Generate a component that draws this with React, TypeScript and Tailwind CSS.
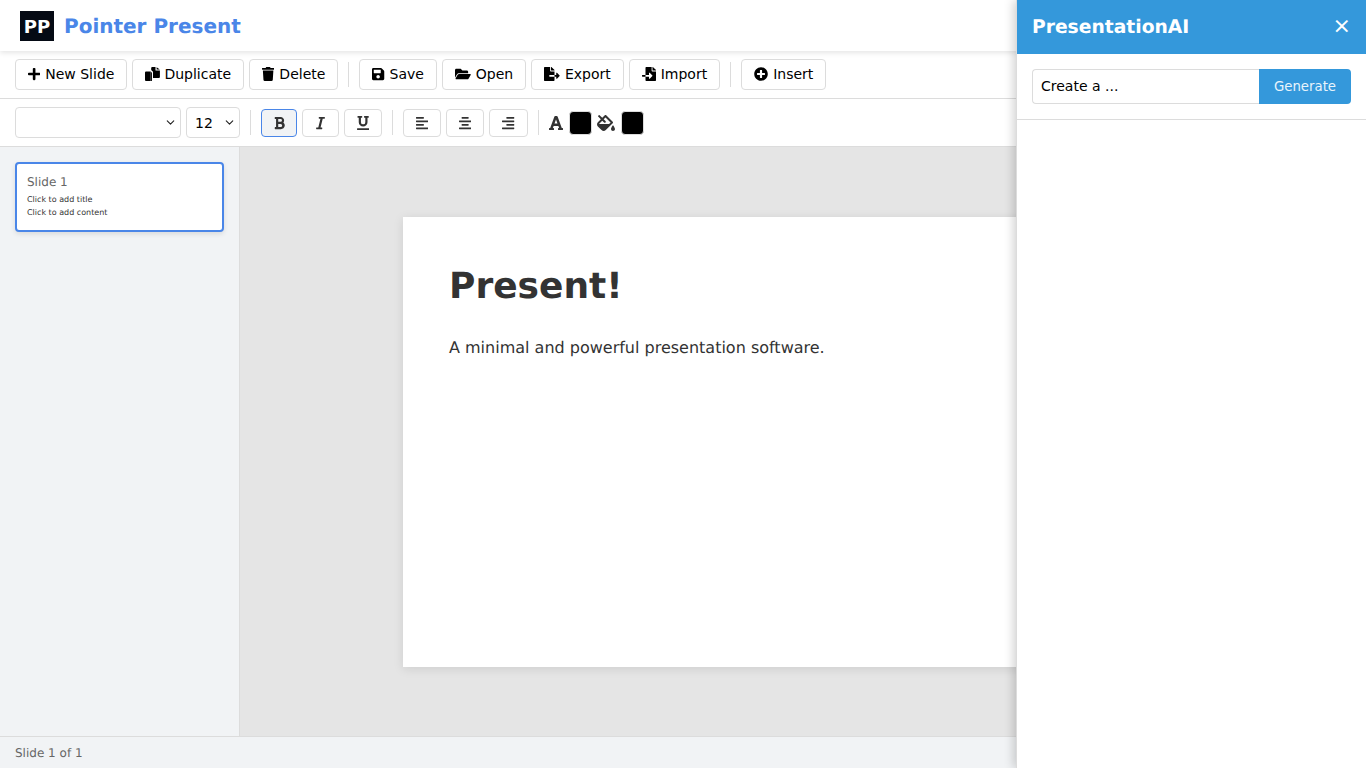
import React from 'react';
import { ChevronDown } from 'lucide-react';
import {
  FaPlus, FaTrash, FaSave, FaFolderOpen, FaFileExport, FaFileImport, FaPlusCircle,
  FaBold, FaItalic, FaUnderline, FaAlignLeft, FaAlignCenter, FaAlignRight, FaFont, FaFillDrip,
} from 'react-icons/fa';

const Btn: React.FC<{ icon: React.ReactNode; label: string }> = ({ icon, label }) => (
  <button className="h-[31px] px-3 pb-px flex items-center gap-[5px] bg-white border border-[#dcdcdc] rounded text-sm text-black">
    {icon}
    {label}
  </button>
);

const FmtBtn: React.FC<{ active?: boolean; w: string; children: React.ReactNode }> = ({ active, w, children }) => (
  <button
    className={`${w} h-[28px] flex items-center justify-center rounded border ${
      active ? 'bg-[#f1f3f5] border-[#4a86e8]' : 'bg-white border-[#dcdcdc]'
    }`}
  >
    {children}
  </button>
);

const Sep = () => <div className="w-px h-[25px] bg-[#dcdcdc]" />;

const Select: React.FC<{ w: string; children: React.ReactNode }> = ({ w, children }) => (
  <div className={`relative ${w} h-[31px]`}>
    <select className="w-full h-full pl-2 appearance-none bg-white border border-[#dcdcdc] rounded text-sm text-black">
      {children}
    </select>
    <ChevronDown size={13} strokeWidth={2} className="absolute right-[4px] top-[9px] text-[#222] pointer-events-none" />
  </div>
);

// two overlapping sheets, front one lower-left
const CopyIcon = () => (
  <svg viewBox="0 0 15 14" className="w-[15px] h-[14px] -mr-px shrink-0" fill="currentColor">
    <path d="M1 4.5h4.6V14H1a1 1 0 0 1-1-1V5.5a1 1 0 0 1 1-1z" />
    <path d="M5.6 4.5 6.9 5.8V14H5.6z" />
    <path d="M6.2 1a1 1 0 0 1 1-1H10.5v3.6H14.9V10a1 1 0 0 1-1 1H8V4.8L6.2 3z" />
    <path d="M11.6 0.2 14.8 2.6H11.6z" />
  </svg>
);

export default function App() {
  return (
    <div className="relative h-[768px] w-[1366px] overflow-hidden flex flex-col bg-white font-['DejaVu_Sans',sans-serif] [text-rendering:geometricPrecision] text-[#333]">
      <header className="relative z-10 h-[51px] shrink-0 flex items-center px-5 gap-[10px] bg-white shadow-[0_2px_5px_rgba(0,0,0,0.1)]">
        <div className="w-[34px] h-[30px] pt-[4px] bg-[#050a14] flex items-center justify-center text-white font-bold text-[18px] leading-none">PP</div>
        <h1 className="pt-px text-[20px] font-bold text-[#4a86e8]">Pointer Present</h1>
      </header>

      <div className="h-[48px] shrink-0 flex items-center px-[15px] gap-[5px] border-b border-[#dcdcdc] bg-white">
        <Btn icon={<FaPlus className="w-[12.25px] h-[14px]" />} label="New Slide" />
        <Btn icon={<CopyIcon />} label="Duplicate" />
        <Btn icon={<FaTrash className="w-[12.25px] h-[14px]" />} label="Delete" />
        <div className="mx-[5px]"><Sep /></div>
        <Btn icon={<FaSave className="w-[12.25px] h-[14px]" />} label="Save" />
        <Btn icon={<FaFolderOpen className="w-[15.75px] h-[14px]" />} label="Open" />
        <Btn icon={<FaFileExport className="w-[15.75px] h-[14px]" />} label="Export" />
        <Btn icon={<FaFileImport className="w-[14px] h-[14px]" />} label="Import" />
        <div className="mx-[5px]"><Sep /></div>
        <Btn icon={<FaPlusCircle className="w-[14px] h-[14px]" />} label="Insert" />
      </div>

      <div className="h-[48px] shrink-0 flex items-center px-[15px] gap-[5px] border-b border-[#dcdcdc] bg-white">
        <Select w="w-[166px]"><option value=""></option></Select>
        <Select w="w-[54px]"><option value="12">12</option></Select>
        <div className="mx-[5px]"><Sep /></div>
        <FmtBtn active w="w-[36px]"><FaBold className="w-[11px] h-[14px] text-[#333]" /></FmtBtn>
        <FmtBtn w="w-[37px]"><FaItalic className="w-[9px] h-[14px]" /></FmtBtn>
        <FmtBtn w="w-[38px]"><FaUnderline className="w-[12.25px] h-[14px]" /></FmtBtn>
        <div className="mx-[5px]"><Sep /></div>
        <FmtBtn w="w-[38px]"><FaAlignLeft className="w-[12.25px] h-[14px]" /></FmtBtn>
        <FmtBtn w="w-[38px]"><FaAlignCenter className="w-[12.25px] h-[14px]" /></FmtBtn>
        <FmtBtn w="w-[39px]"><FaAlignRight className="w-[12.25px] h-[14px]" /></FmtBtn>
        <div className="mx-[5px]"><Sep /></div>
        <FaFont className="w-[14px] h-[16px] text-[#333]" />
        <div className="ml-px w-[23px] h-[24px] bg-black border border-[#dcdcdc] rounded-sm" />
        <FaFillDrip className="w-[18px] h-[16px] text-[#333]" />
        <div className="ml-px w-[23px] h-[24px] bg-black border border-[#dcdcdc] rounded-sm" />
      </div>

      <main className="flex-1 flex min-h-0">
        <aside className="w-[240px] shrink-0 p-[15px] bg-[#f1f3f5] border-r border-[#dcdcdc]">
          <div className="h-[70px] px-[10px] pt-[11px] bg-white border-2 border-[#4a86e8] rounded shadow-[0_2px_5px_rgba(0,0,0,0.1)]">
            <div className="text-xs text-[#666] leading-[14px]">Slide 1</div>
            <div className="mt-[4px] text-[8px] leading-[13px] text-[#333]">Click to add title</div>
            <div className="text-[8px] leading-[13px] text-[#333]">Click to add content</div>
          </div>
        </aside>
        <section className="flex-1 min-w-0 flex items-center justify-center bg-[#e5e5e5] overflow-hidden">
          <div className="w-[800px] h-[450px] shrink-0 bg-white px-[46px] pt-[45px] shadow-[0_2px_10px_rgba(0,0,0,0.1)]">
            <h2 className="text-[36px] leading-[50px] font-bold text-[#333]">Present!</h2>
            <p className="mt-[24px] text-base leading-[24px] text-[#333]">A minimal and powerful presentation software.</p>
          </div>
        </section>
      </main>

      <footer className="h-[32px] shrink-0 flex items-center px-[15px] bg-[#f1f3f5] border-t border-[#dcdcdc] text-xs text-[#666]">
        Slide 1 of 1
      </footer>

      <div className="absolute right-0 top-0 bottom-0 z-20 w-[350px] flex flex-col bg-white border-l border-[#dcdcdc] shadow-[-2px_0_10px_rgba(0,0,0,0.2)]">
        <div className="h-[54px] shrink-0 flex items-center justify-between px-[15px] bg-[#3498db] text-white">
          <span className="pt-[3px] text-[18.72px] font-bold">PresentationAI</span>
          <span className="text-[22px] leading-none">×</span>
        </div>
        <div className="flex h-[66px] shrink-0 items-start p-[15px] border-b border-[#dcdcdc]">
          <input
            readOnly
            value="Create a ..."
            className="flex-1 min-w-0 h-[35px] px-2 pb-[2px] bg-white border border-[#dcdcdc] border-r-0 rounded-l text-sm text-black outline-none"
          />
          <button className="w-[92px] h-[35px] bg-[#3498db] text-[#e8f4fc] text-[13.3px] rounded-r">Generate</button>
        </div>
      </div>
    </div>
  );
}
